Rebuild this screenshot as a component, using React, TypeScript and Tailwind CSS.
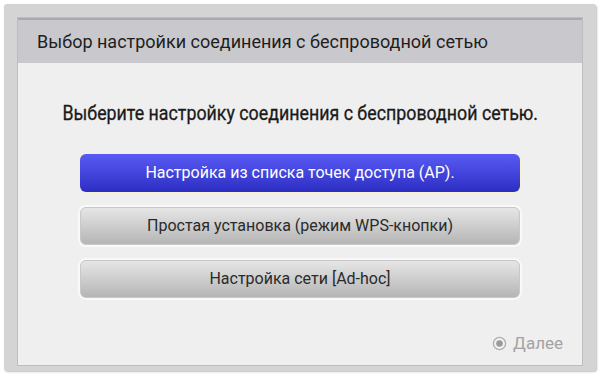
import React from "react";

const font = { fontFamily: 'Roboto, "DejaVu Sans Condensed", sans-serif' };

export default function App() {
  return (
    <div className="w-[600px] h-[375px] bg-white pt-[4px] pl-[4px]" style={font}>
      <div className="w-[592px] h-[367px] bg-[#d4d4d4] rounded-[3px] pt-[13px] pl-[13px] shadow-[1px_1px_2px_rgba(0,0,0,0.25)]">
        <div className="w-[566px] h-[349px] bg-[#efefef] flex flex-col border border-[#bdbdbd]">
          <div className="h-[45px] bg-[#c9c9cd] border-t-[2px] border-[#a9a9ad] flex items-center pl-[19px] text-[18px] text-[#1e1e1e] whitespace-nowrap">
            Выбор настройки соединения с беспроводной сетью
          </div>
          <div className="flex flex-col items-center">
            <div className="mt-[40px] text-[20px] scale-x-[0.89] text-[#1a1a1a] whitespace-nowrap leading-none [-webkit-text-stroke:0.3px_#1a1a1a]">
              Выберите настройку соединения с беспроводной сетью.
            </div>
            <div className="mt-[31px] flex flex-col gap-[15px] w-[440px]">
              <div className="h-[38px] rounded-[6px] bg-gradient-to-b from-[#5a5af5] to-[#2d2dc2] shadow-[0_0_0_1px_#f4f0d0] flex items-center justify-center text-white text-[16px] whitespace-nowrap">
                Настройка из списка точек доступа (AP).
              </div>
              <div className="h-[38px] rounded-[6px] bg-gradient-to-b from-[#e6e6e6] to-[#b5b5b5] border border-[#c8c8c8] shadow-[0_0_0_2px_#f9f9f9] flex items-center justify-center text-[#2a2a2a] text-[16px] whitespace-nowrap">
                Простая установка (режим WPS-кнопки)
              </div>
              <div className="h-[38px] rounded-[6px] bg-gradient-to-b from-[#e6e6e6] to-[#b5b5b5] border border-[#c8c8c8] shadow-[0_0_0_2px_#f9f9f9] flex items-center justify-center text-[#2a2a2a] text-[16px] whitespace-nowrap">
                Настройка сети [Ad-hoc]
              </div>
            </div>
          </div>
          <div className="mt-auto mb-[9px] mr-[19px] self-end flex items-center gap-[6px] text-[#a3a3a3] text-[17px]">
            <svg width="15" height="15" viewBox="0 0 16 16">
              <circle cx="8" cy="8" r="6.5" fill="#f2f2f2" stroke="#b0b0b0" strokeWidth="1.5" />
              <circle cx="8" cy="8" r="3.5" fill="#9a9a9a" />
            </svg>
            <span>Далее</span>
          </div>
        </div>
      </div>
    </div>
  );
}
